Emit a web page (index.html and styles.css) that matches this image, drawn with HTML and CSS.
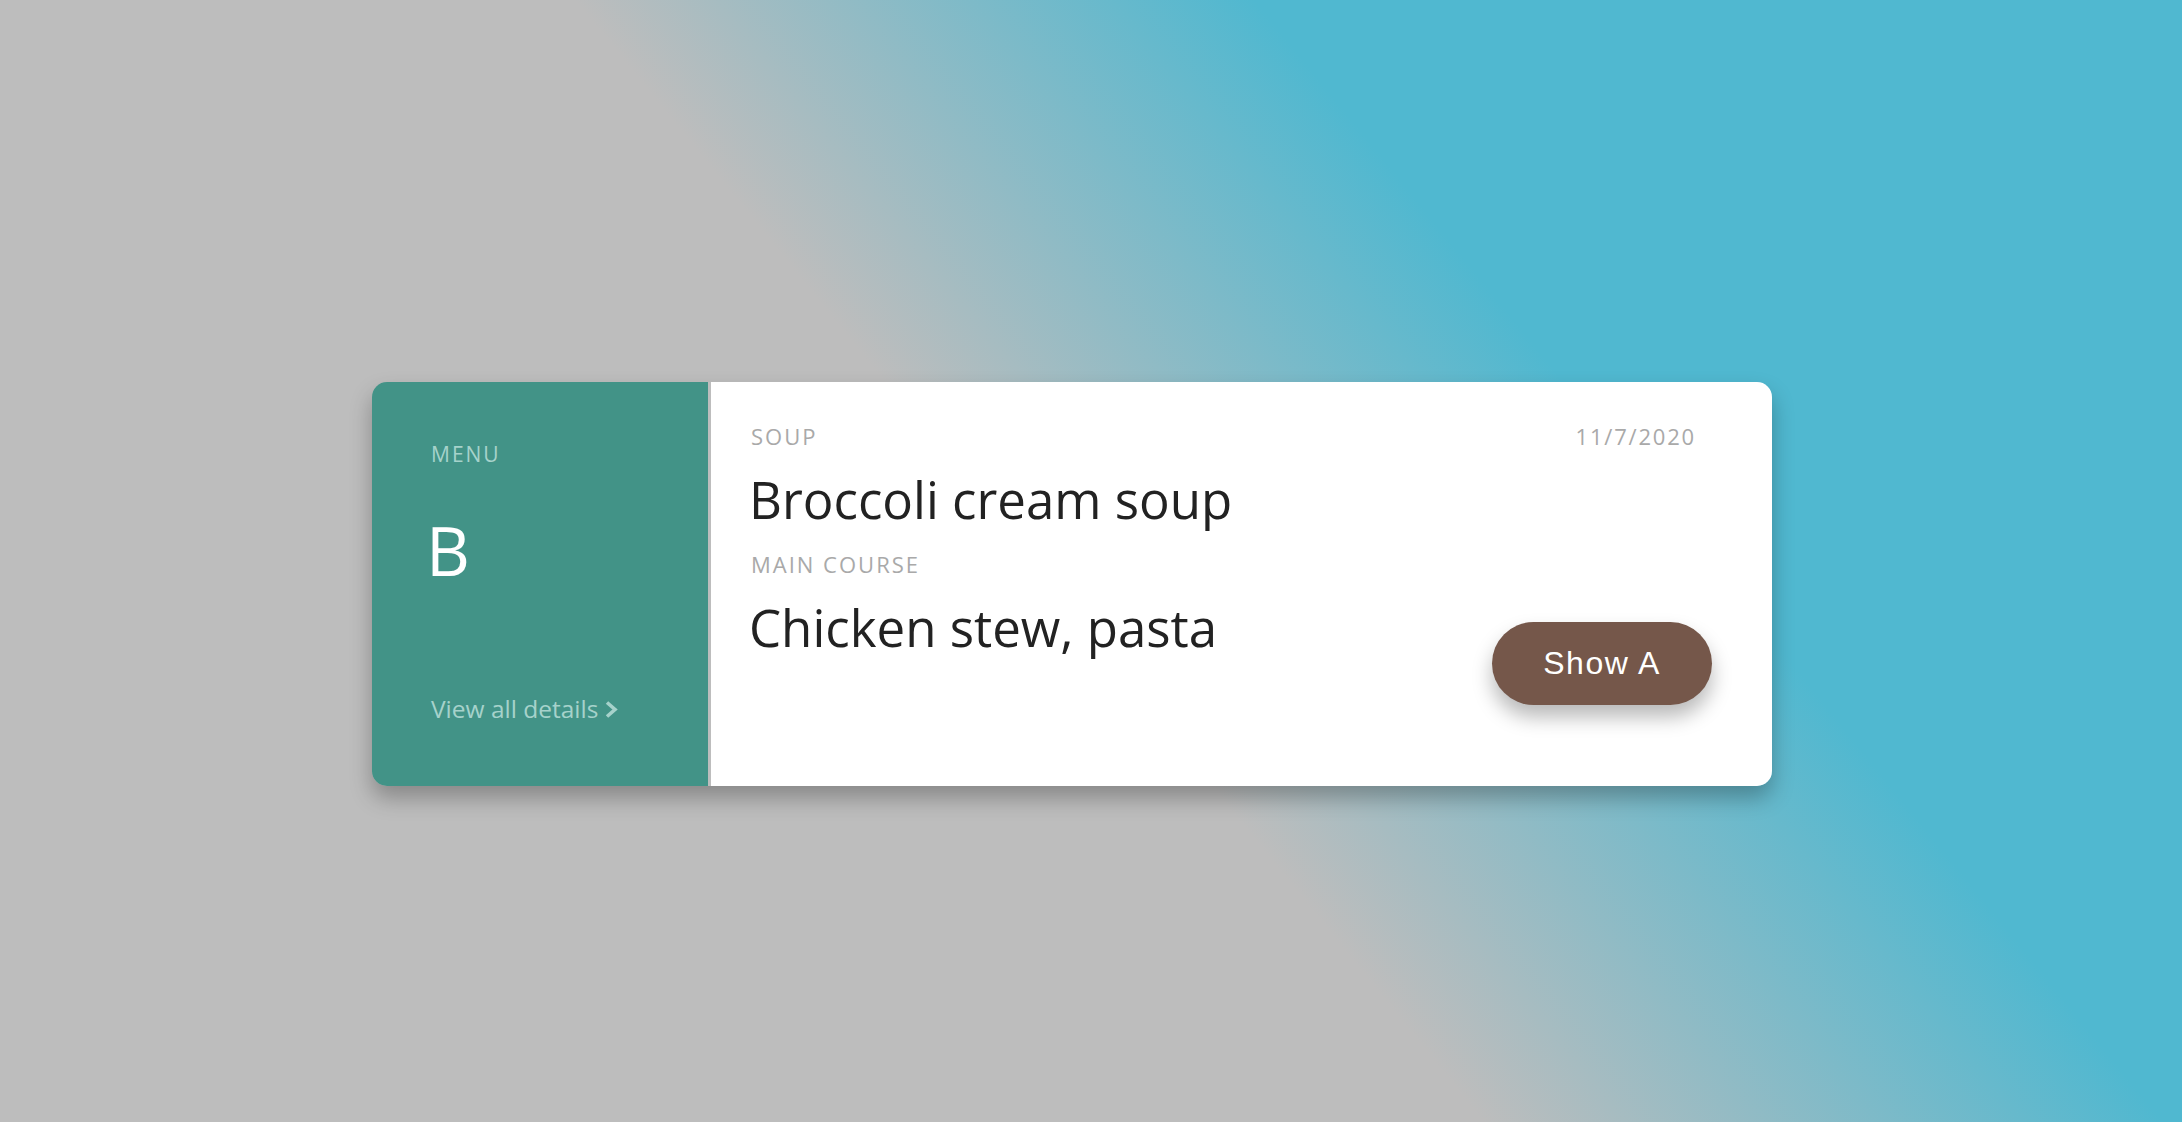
FILE: index.html
```html
<!DOCTYPE html>
<html lang="en">
<head>
<meta charset="utf-8">
<title>Menu</title>
<link rel="stylesheet" href="styles.css">
</head>
<body>
<div class="card">
  <aside class="side">
    <div class="side-label">MENU</div>
    <div class="side-letter">B</div>
    <a class="side-link" href="#">View all details
      <svg class="chev" width="14" height="19" viewBox="0 0 14 19"><polyline points="3,2.5 11,9.5 3,16.5" fill="none" stroke="currentColor" stroke-width="3.6" stroke-linejoin="miter"/></svg>
    </a>
  </aside>
  <section class="main">
    <div class="row-top">
      <div class="label">SOUP</div>
      <div class="date">11/7/2020</div>
    </div>
    <h2 class="dish">Broccoli cream soup</h2>
    <div class="row-bottom">
      <div class="col">
        <div class="label label-main">MAIN COURSE</div>
        <h2 class="dish">Chicken stew, pasta</h2>
      </div>
      <button class="btn">Show A</button>
    </div>
  </section>
</div>
</body>
</html>
```

FILE: styles.css
```css
html, body {
  margin: 0;
  padding: 0;
  height: 100%;
}
body {
  background: linear-gradient(51deg, #bdbdbd 0%, #bdbdbd 48%, #50b8d0 70%, #50b8d0 100%);
  font-family: "Open Sans", "Liberation Sans", sans-serif;
  overflow: hidden;
}
.card {
  display: flex;
  gap: 3px;
  width: 1400px;
  height: 404px;
  margin: 382px 0 0 372px;
  border-radius: 15px;
  box-shadow: 0 12px 22px rgba(0, 0, 0, 0.28);
}
.side {
  width: 336px;
  flex: none;
  background: #429387;
  border-radius: 15px 0 0 15px;
  box-sizing: border-box;
  padding: 62px 0 65px 59px;
  display: flex;
  flex-direction: column;
  align-items: flex-start;
}
.side-label {
  font-size: 21px;
  line-height: 1;
  letter-spacing: 2px;
  color: #a6d2cb;
}
.side-letter {
  margin: 51px 0 0 -5px;
  font-size: 68px;
  line-height: 1;
  color: #ffffff;
}
.side-link {
  margin-top: auto;
  font-size: 24.5px;
  line-height: 1;
  color: #a6d2cb;
  text-decoration: none;
  display: flex;
  align-items: center;
  gap: 6px;
}
.chev {
  display: block;
  margin-top: 2px;
}
.main {
  flex: 1;
  background: #ffffff;
  border-radius: 0 15px 15px 0;
  box-sizing: border-box;
  padding: 43px 60px 0 38px;
}
.row-top {
  display: flex;
  justify-content: space-between;
  align-items: flex-start;
}
.label {
  font-size: 22px;
  line-height: 1;
  letter-spacing: 2px;
  color: #a9a9a9;
  margin-left: 2px;
}
.date {
  font-size: 22px;
  line-height: 1;
  letter-spacing: 1.8px;
  color: #a9a9a9;
  margin-right: 16px;
}
.dish {
  margin: 27px 0 0;
  font-size: 51px;
  line-height: 1;
  font-weight: 400;
  color: #222222;
}
.row-bottom {
  display: flex;
  justify-content: space-between;
  align-items: flex-start;
}
.label-main {
  margin-top: 28px;
}
.btn {
  margin-top: 97px;
  width: 220px;
  height: 83px;
  border: none;
  border-radius: 42px;
  background: #75574a;
  color: #ffffff;
  font-family: "Liberation Sans", Arial, sans-serif;
  font-size: 32px;
  letter-spacing: 1.5px;
  box-shadow: 0 12px 20px rgba(0, 0, 0, 0.28);
  padding: 0;
}
```
